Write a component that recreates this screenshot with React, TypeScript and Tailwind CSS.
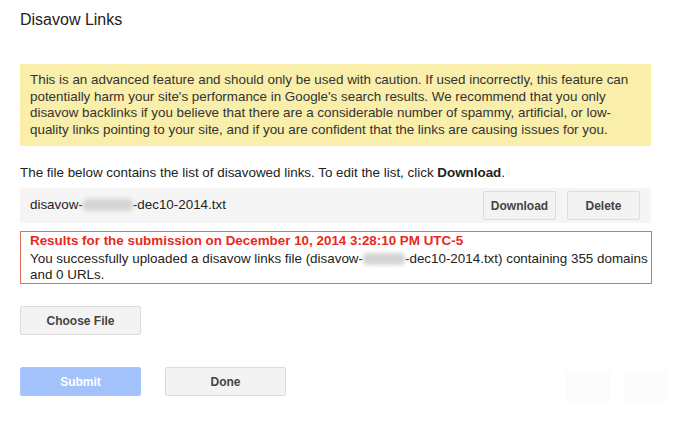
import React from 'react';

const font = { fontFamily: '"Liberation Sans", Arial, sans-serif' };

function GrayButton({ label, className = '' }: { label: string; className?: string }) {
  return (
    <button
      className={`h-[29px] rounded-[2px] border border-[#dcdcdc] bg-[#f3f3f3] text-[12px] font-bold text-[#444] ${className}`}
    >
      {label}
    </button>
  );
}

function Blur({ w }: { w: string }) {
  return <span className={`inline-block h-[12px] align-middle rounded-sm bg-[#d4d4d4] blur-[2px] ${w}`} />;
}

export default function App() {
  return (
    <div className="relative w-[695px] h-[433px] bg-white overflow-hidden text-[#222]" style={font}>
      <div className="pl-[20px] pr-[43px] pt-[10px]">
        <h1 className="text-[16px] leading-[20px] text-[#222]">Disavow Links</h1>

        <div className="mt-[34px] mr-[1px] bg-[#f9eeaa] px-[10px] py-[8px] text-[13.4px] leading-[16.5px] text-[#333] whitespace-nowrap">
          This is an advanced feature and should only be used with caution. If used incorrectly, this feature can
          <br />
          potentially harm your site's performance in Google's search results. We recommend that you only
          <br />
          disavow backlinks if you believe that there are a considerable number of spammy, artificial, or low-
          <br />
          quality links pointing to your site, and if you are confident that the links are causing issues for you.
        </div>

        <p className="mt-[19px] text-[13.4px] leading-[16px] text-[#222]">
          The file below contains the list of disavowed links. To edit the list, click <b>Download</b>.
        </p>

        <div className="mt-[7px] mr-[1px] flex items-center bg-[#f5f5f5] h-[35px] pl-[10px] pr-[11px]">
          <span className="text-[13.4px] text-[#222] flex items-center">
            disavow-<Blur w="w-[50px]" />-dec10-2014.txt
          </span>
          <div className="ml-auto flex gap-[11px]">
            <GrayButton label="Download" className="w-[73px]" />
            <GrayButton label="Delete" className="w-[73px]" />
          </div>
        </div>

        <div className="mt-[8px] border border-[#e2705f] pl-[9px] pr-[2px] text-[13.4px] whitespace-nowrap">
          <div className="font-bold leading-[17px] mb-[2px] text-[#e8291c]">
            Results for the submission on December 10, 2014 3:28:10 PM UTC-5
          </div>
          <div className="leading-[16px] text-[#222]">
            You successfully uploaded a disavow links file (disavow-<Blur w="w-[42px]" />-dec10-2014.txt) containing 355 domains
            <br />
            and 0 URLs.
          </div>
        </div>

        <GrayButton label="Choose File" className="mt-[22px] w-[121px]" />

        <div className="mt-[32px] flex gap-[24px]">
          <button className="h-[29px] w-[121px] rounded-[2px] border border-[#a9c6fa] bg-[#a3c2fb] text-[12px] font-bold text-white">
            Submit
          </button>
          <GrayButton label="Done" className="w-[121px]" />
        </div>
      </div>

      <div className="absolute left-[566px] top-[370px] w-[44px] h-[32px] rounded-[3px] bg-[#fcfcfc]" />
      <div className="absolute left-[624px] top-[370px] w-[43px] h-[32px] rounded-[3px] bg-[#fcfcfc]" />
    </div>
  );
}
